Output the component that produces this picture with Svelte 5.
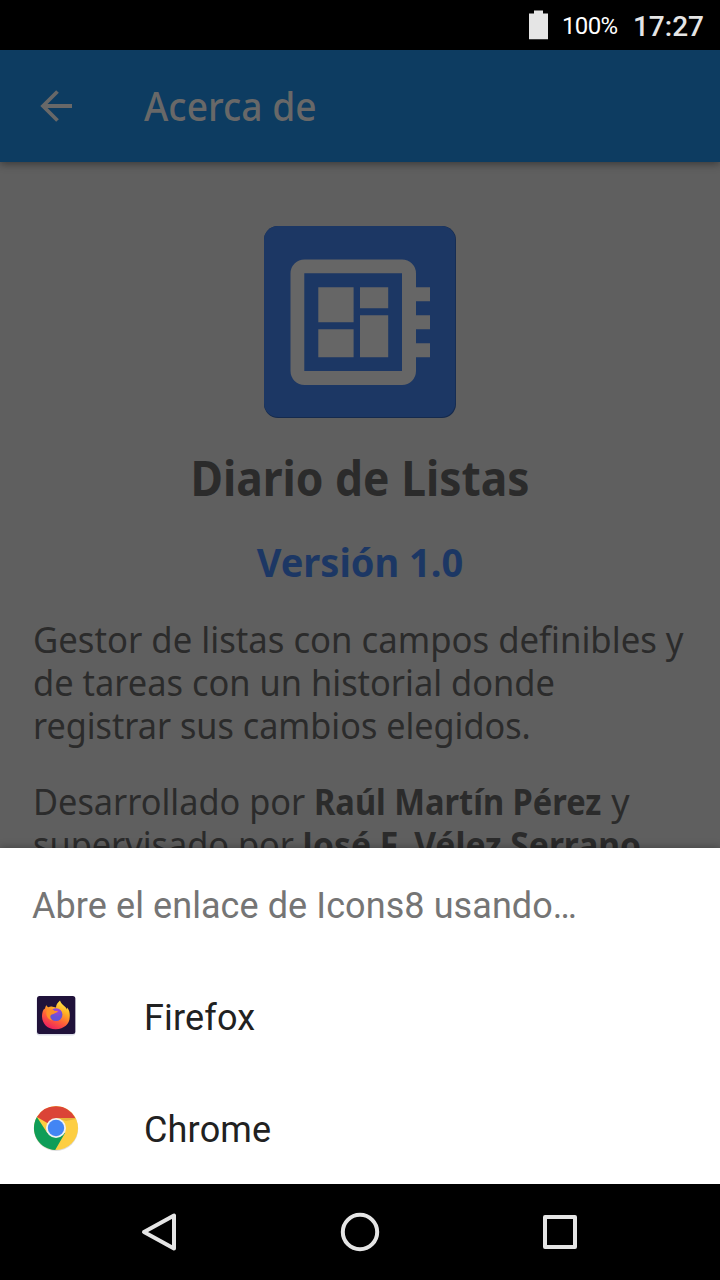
<script>
  const intro = [
    'Gestor de listas con campos definibles y',
    'de tareas con un historial donde',
    'registrar sus cambios elegidos.'
  ];
</script>

<div class="screen">
  <div class="status">
    <svg width="20" height="30" viewBox="0 0 20 30"><path d="M5 .4h9v3h5V29.2H0V3.400h5z" fill="#e5e5e5" /></svg>
    <span class="percent">100%</span>
    <span class="clock">17:27</span>
  </div>

  <header>
    <svg width="32" height="32" viewBox="0 0 32 32" fill="none" stroke="#686868" stroke-width="3.800">
      <path d="M32 16H4M17.500 1.500 3 16l14.500 14.500" />
    </svg>
    <h1>Acerca de</h1>
  </header>

  <main>
    <svg class="logo" width="192" height="192" viewBox="0 0 192 192">
      <rect width="192" height="192" rx="14" fill="#152a4d" />
      <rect width="191.300" height="191" rx="14" fill="#1c3764" />
      <path fill="#666" fill-rule="evenodd" d="M40.500 33.500H138a14 14 0 0 1 14 14v13.700h14v14h-14v14h14v14h-14v14h14v14h-14V145a14 14 0 0 1-14 14H40.500a14 14 0 0 1-14-14V47.500a14 14 0 0 1 14-14zM40.300 47.300V145H138V47.300z" />
      <path fill="#666" d="M54.300 61.200h35.300v35H54.300zM96 61.200h28.200v21H96zM54.300 103.300h35.300v28H54.300zM96 89.200h28.200v42.100H96z" />
    </svg>
    <h2>Diario de Listas</h2>
    <h3>Versión 1.0</h3>
    <p>
      {#each intro as line, i}
        <span class="line intro{i}">{line}</span>
      {/each}
    </p>
    <p class="credits">
      <span class="line"><span class="role">Desarrollado por</span>{' '}<b class="author">Raúl Martín Pérez</b>{' '}<span>y</span></span>
      <span class="line"><span class="role">supervisado por</span>{' '}<b class="tutor">José F. Vélez Serrano</b></span>
    </p>
  </main>

  <section class="sheet">
    <div class="prompt">Abre el enlace de Icons8 usando…</div>
    <div class="row">
      <svg width="48" height="48" viewBox="0 0 48 48">
        <defs>
          <linearGradient id="flame" x1=".8" y1="0" x2=".3" y2="1">
            <stop offset="0" stop-color="#fff04a" /><stop offset=".35" stop-color="#ffad24" />
            <stop offset=".65" stop-color="#ff6038" /><stop offset="1" stop-color="#ec1c62" />
          </linearGradient>
          <radialGradient id="globe" cx=".6" cy=".2"><stop offset="0" stop-color="#a93fd8" /><stop offset="1" stop-color="#6753d7" /></radialGradient>
        </defs>
        <rect x="4.500" y="5" width="39" height="38.500" rx="3" fill="#dcdfe9" />
        <rect x="5" y="4" width="38.300" height="38" rx="2.500" fill="#20123a" />
        <path d="M14.300 13c.6 1.400 1.200 2 2.300 2.200 1-.7 2.400-.9 4-.5l3.400.8c.2-2.700 1.400-4.700 4-6.900.8 2.600 2.600 4 4.500 5.600 1.200.8 2 2 2.400 3.200l.4-1.800c2.300 3.300 2.700 6 2.400 9.700C37.600 32 32 37 24 37.300S10.200 32 10 24.500c-.1-3.700 1-6.500 2.500-8.100l.3 1.200c.2-1.400.7-3.200 1.500-4.600z" fill="url(#flame)" />
        <circle cx="24" cy="22.600" r="6.400" fill="url(#globe)" />
        <path d="M15 17.500c3-1.600 6-.6 7.400 1.300l3.500.3c-.4 1.400-2 2-3.500 2.300-1 .7-2.300.5-3.500 1.500-1.200 1.700-.5 4 1.500 5.500-4.500-.7-7.500-5-5.400-10.900z" fill="#ff9128" />
      </svg>
      <span class="app">Firefox</span>
    </div>
    <div class="row">
      <svg width="48" height="48" viewBox="0 0 48 48">
        <circle cx="24" cy="24.700" r="22.200" fill="#ddd" />
        <circle cx="24" cy="24" r="22" fill="#fdce42" />
        <path d="M24 24 4.900 13A22 22 0 0 1 43.300 14H24z" fill="#db4437" />
        <path d="M4.900 13A22 22 0 0 0 23.200 46L33 29 24 24 15.300 29z" fill="#0f9d58" />
        <path d="M24 14h19.300l.4 1L34 17z" fill="#d9a337" opacity=".6" />
        <circle cx="24" cy="24" r="10" fill="#f1f1f1" />
        <circle cx="24" cy="24" r="8.200" fill="#4285f4" />
      </svg>
      <span class="app">Chrome</span>
    </div>
  </section>

  <nav>
    <svg width="40" height="40" viewBox="0 0 40 40"><path d="M4 20 34 3.500v33z" /></svg>
    <svg width="40" height="40" viewBox="0 0 40 40"><circle cx="20" cy="20" r="17.200" /></svg>
    <svg width="40" height="40" viewBox="0 0 40 40"><rect x="5" y="5" width="30" height="30" /></svg>
  </nav>
</div>

<style>
  :global(body) { margin: 0; background: #000; }
  .screen {
    width: 720px; height: 1280px; overflow: hidden;
    display: flex; flex-direction: column;
    background: #5f5f5f; font-family: Roboto, sans-serif;
  }
  svg { display: block; flex: none; }
  .status {
    height: 50px; flex: none; box-sizing: border-box; padding-right: 16px;
    display: flex; justify-content: flex-end; align-items: center;
    background: #000; color: #e5e5e5; white-space: nowrap;
  }
  .percent { width: 57px; margin: 2px 0 0 13px; font-size: 24px; letter-spacing: -.6px; color: #fff; }
  .clock { margin: 2px 0 0 14px; font-size: 28px; font-weight: 500; }
  header {
    height: 112px; flex: none; box-sizing: border-box; padding-left: 40px;
    display: flex; align-items: center; gap: 72px;
    background: #0d3c61; box-shadow: 0 2px 8px rgba(0, 0, 0, .4);
    z-index: 1;
  }
  h1, h2, h3, p { margin: 0; font-family: "Noto Sans", sans-serif; white-space: nowrap; }
  h1 { font-size: 40px; font-weight: 500; line-height: 56px; color: #686868; transform: scaleX(.930); transform-origin: left; }
  main {
    height: 686px; flex: none; box-sizing: border-box; overflow: hidden;
    padding: 64px 32px 0; color: #2b2b2b;
  }
  .logo { margin: 0 auto; }
  h2 { margin-top: 30px; font-size: 48px; line-height: 60px; text-align: center; transform: scaleX(.924); }
  h3 { margin-top: 29px; font-size: 40px; line-height: 50px; text-align: center; color: #1c3764; transform: scaleX(.95); }
  p { margin-top: 31px; padding-left: .700px; font-size: 36px; font-weight: 430; line-height: 43px; }
  .credits { margin-top: 33px; }
  .line { display: block; white-space: pre; transform-origin: left; }
  .intro0 { transform: scaleX(.964); }
  .intro1 { transform: scaleX(.956); }
  .intro2 { transform: scaleX(.950); }
  .role, .author, .tutor { display: inline-block; transform-origin: left; }
  .role { transform: scaleX(.953); margin-right: -13.500px; }
  .author { transform: scaleX(.905); margin-right: -30px; }
  .tutor { transform: scaleX(.932); }
  .sheet {
    height: 336px; flex: none; background: #fff; z-index: 1;
    box-shadow: 0 0 8px rgba(0, 0, 0, .35); color: #212121;
  }
  .prompt {
    height: 112px; padding: 2px 32px 0; box-sizing: border-box;
    font-size: 36px; line-height: 112px; letter-spacing: .080px; color: #757575;
  }
  .row {
    height: 112px; padding-left: 32px; display: flex; align-items: center; gap: 64px;
    font-size: 36px;
  }
  .app { padding-top: 4px; letter-spacing: .180px; }
  nav {
    height: 96px; flex: none; display: flex; justify-content: center; align-items: center; gap: 160px;
    background: #000; z-index: 2;
  }
  nav svg { fill: none; stroke: #e5e5e5; stroke-width: 4; stroke-linejoin: round; }
</style>
